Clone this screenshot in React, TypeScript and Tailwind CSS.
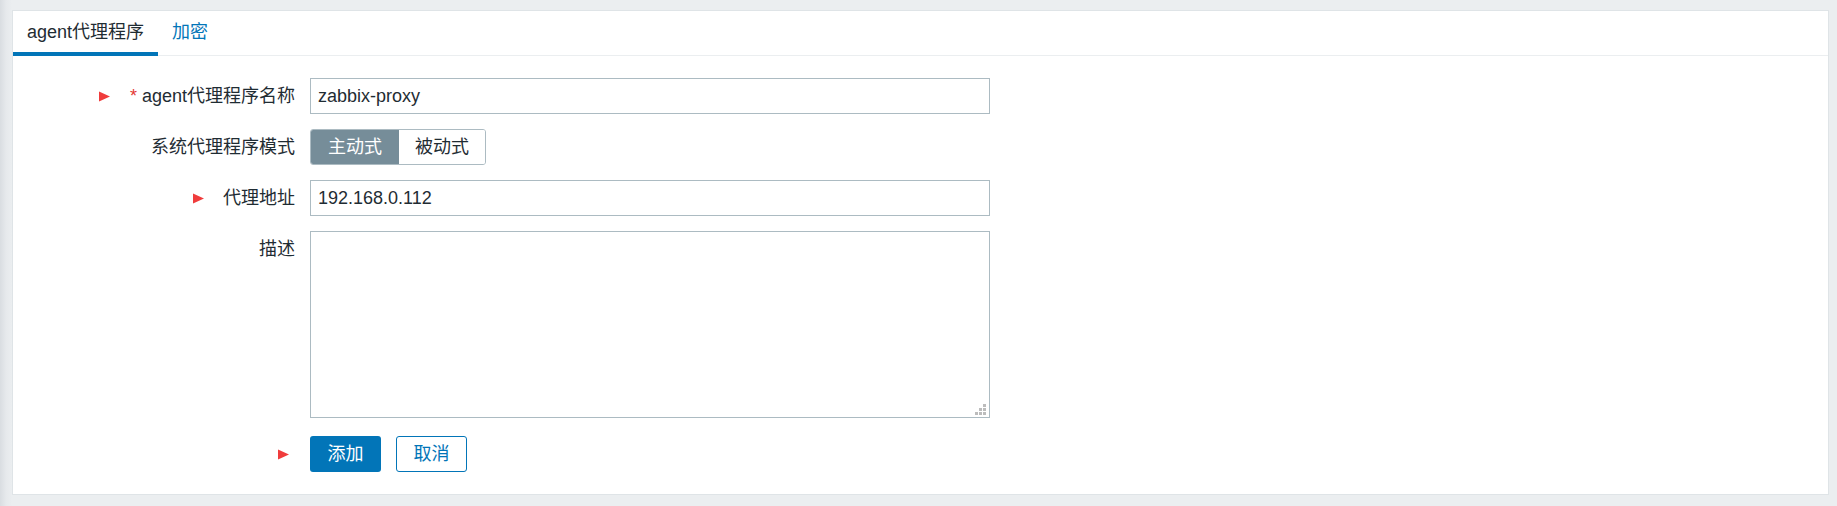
import React from "react";

function Arrow() {
  return (
    <svg width="11" height="11" viewBox="0 0 11 11" className="shrink-0">
      <polygon points="0,0.5 11,5.5 0,10.5" fill="#f03c3c" />
    </svg>
  );
}

export default function App() {
  return (
    <div className="w-full h-[506px] bg-[linear-gradient(to_right,#d9dde1_0px,#e6e9ec_6px,#ebeef0_12px)] pt-[10px] pl-[12px] pr-[8px] pb-[11px] font-['Liberation_Sans','Noto_Sans_CJK_SC',sans-serif] text-[18px] text-[#1f2c33]">
      <div className="h-full bg-white border border-[#dfe4e7] flex flex-col">
        <div className="flex border-b border-[#ebeef0] h-[45px]">
          <div className="h-[45px] px-[14px] pt-[1px] border-b-4 border-[#0275b8] flex items-center leading-[22px] -mb-px">
            agent代理程序
          </div>
          <div className="h-[44px] px-[14px] pt-[1px] pb-[3px] flex items-center leading-[22px] text-[#0275b8]">
            加密
          </div>
        </div>
        <div className="pt-[22px] grid grid-cols-[282px_1fr] gap-x-[15px] gap-y-[15px] leading-[22px]">
          <div className="h-[36px] flex items-center justify-end">
            <Arrow />
            <span className="ml-[20px] text-[#e33734]">*</span>
            <span className="ml-[5px]">agent代理程序名称</span>
          </div>
          <div>
            <input
              defaultValue="zabbix-proxy"
              className="w-[680px] h-[36px] border border-[#acbbc2] px-[7px] outline-none text-[18px] text-[#1f2c33] bg-white"
            />
          </div>

          <div className="h-[36px] flex items-center justify-end">系统代理程序模式</div>
          <div className="flex">
            <div className="flex h-[36px] border border-[#acbbc2] rounded-[3px] overflow-hidden">
              <div className="w-[88px] bg-[#768d99] text-white flex items-center justify-center">主动式</div>
              <div className="w-[86px] bg-white flex items-center justify-center">被动式</div>
            </div>
          </div>

          <div className="h-[36px] flex items-center justify-end">
            <Arrow />
            <span className="ml-[19px]">代理地址</span>
          </div>
          <div>
            <input
              defaultValue="192.168.0.112"
              className="w-[680px] h-[36px] border border-[#acbbc2] px-[7px] outline-none text-[18px] text-[#1f2c33] bg-white"
            />
          </div>

          <div className="h-[36px] flex items-center justify-end">描述</div>
          <div>
            <div className="relative w-[680px] h-[187px]">
              <textarea className="w-full h-full border border-[#acbbc2] resize-none outline-none block bg-white" />
              <svg width="12" height="12" viewBox="0 0 12 12" className="absolute right-[3px] bottom-[2px]">
                <rect x="8" y="0" width="3" height="3" fill="#bcbcbc" />
                <rect x="4" y="4" width="3" height="3" fill="#bcbcbc" />
                <rect x="8" y="4" width="3" height="3" fill="#bcbcbc" />
                <rect x="0" y="8" width="3" height="3" fill="#bcbcbc" />
                <rect x="4" y="8" width="3" height="3" fill="#bcbcbc" />
                <rect x="8" y="8" width="3" height="3" fill="#bcbcbc" />
              </svg>
            </div>
          </div>

          <div className="h-[36px] mt-[3px] flex items-center justify-end pr-[6px]">
            <Arrow />
          </div>
          <div className="flex gap-[15px] mt-[3px]">
            <button className="w-[71px] h-[36px] bg-[#0275b8] text-white rounded-[3px] leading-[22px]">添加</button>
            <button className="w-[71px] h-[36px] bg-white text-[#0275b8] border border-[#0275b8] rounded-[3px] leading-[22px]">取消</button>
          </div>
        </div>
      </div>
    </div>
  );
}
